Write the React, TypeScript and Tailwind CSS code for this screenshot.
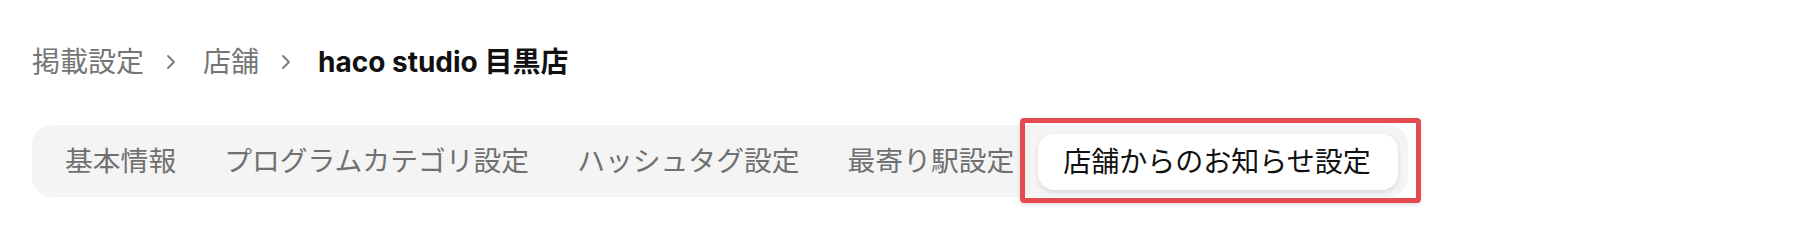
import React from "react";

const FONT = {
  fontFamily: 'Inter, "Noto Sans CJK JP", "Noto Sans", sans-serif',
};

const TABS = [
  "基本情報",
  "プログラムカテゴリ設定",
  "ハッシュタグ設定",
  "最寄り駅設定",
  "店舗からのお知らせ設定",
];
const ACTIVE = 4;

function Chevron() {
  return (
    <svg width="10" height="16" viewBox="0 0 10 16" className="ml-[22px] mr-[27px] shrink-0">
      <polyline
        points="2,2 8,8 2,14"
        fill="none"
        stroke="#7a7a7a"
        strokeWidth="1.8"
        strokeLinecap="round"
        strokeLinejoin="round"
      />
    </svg>
  );
}

export default function App() {
  return (
    <div className="w-[1802px] h-[230px] bg-white pl-[32px] pt-[43px]" style={FONT}>
      {/* Breadcrumb */}
      <div className="flex items-center h-[38px] text-[28px] leading-[38px]">
        <span className="text-[#757575]">掲載設定</span>
        <Chevron />
        <span className="text-[#757575]">店舗</span>
        <Chevron />
        <span className="font-bold text-[#111111]">haco studio 目黒店</span>
      </div>

      {/* Tabs */}
      <div className="mt-[44px] inline-flex items-center bg-[#f4f4f4] rounded-[20px] pl-[9px] pr-[10px] pt-[9px] pb-[7px]">
        {TABS.map((t, i) =>
          i === ACTIVE ? (
            <div key={t} className="relative">
              <div className="h-[56px] flex items-center pl-[25px] pr-[27px] bg-white rounded-[16px] shadow-[0_2px_5px_rgba(0,0,0,0.12)] text-[28px] text-[#111111]">
                {t}
              </div>
              <span className="absolute -left-[18px] -top-[16px] -right-[23px] -bottom-[13px] border-[5px] border-[#e34b50] rounded-[4px] shadow-[0_2px_4px_rgba(0,0,0,0.12)] pointer-events-none" />
            </div>
          ) : (
            <div
              key={t}
              className="h-[56px] flex items-center px-[24px] text-[27.8px] text-[#707070]"
            >
              {t}
            </div>
          )
        )}
      </div>
    </div>
  );
}
